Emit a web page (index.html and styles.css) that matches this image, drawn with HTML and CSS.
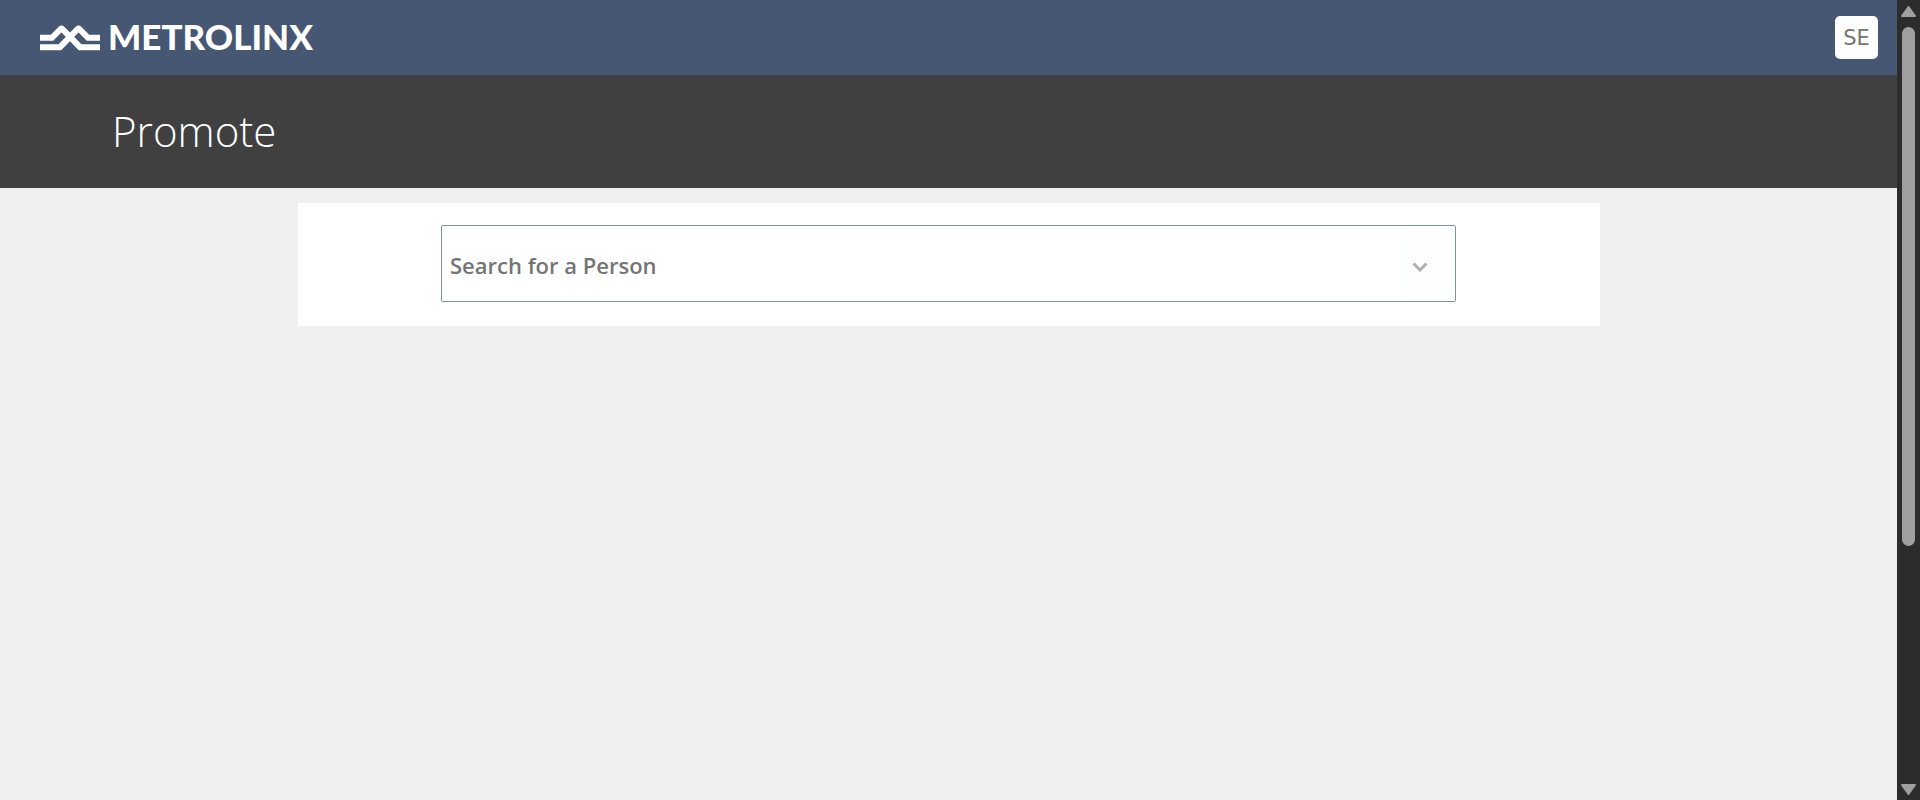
FILE: index.html
```html
<!DOCTYPE html>
<html lang="en">
<head>
<meta charset="utf-8">
<meta name="viewport" content="width=device-width, initial-scale=1">
<title>Promote</title>
<link rel="stylesheet" href="styles.css">
</head>
<body class="window">
<div class="page">
  <header class="topbar">
    <a class="brand" href="#">
      <svg class="brand-mark" viewBox="0 0 60 26" aria-hidden="true">
        <path d="M0 12.800H12L20.500 4.200Q21.500 3.300 22.500 4.200L40 22.200H60M0 22.200H20L37.500 4.200Q38.500 3.300 39.500 4.200L48 12.800H60"/>
      </svg>
      <span class="brand-name">METROLINX</span>
    </a>
    <button class="avatar" type="button">SE</button>
  </header>
  <div class="titlebar">
    <h1 class="title">Promote</h1>
  </div>
  <main class="content">
    <form class="card">
      <div class="combo">
        <input class="combo-input" type="text" placeholder="Search for a Person" aria-label="Search for a Person">
        <button class="combo-toggle" type="button" aria-label="Show people">
          <svg class="chevron" viewBox="0 0 16 10" aria-hidden="true"><path d="M1.500 1.500L8 8L14.500 1.500"/></svg>
        </button>
      </div>
    </form>
  </main>
</div>
<div class="scrollbar" aria-hidden="true">
  <svg class="arrow" viewBox="0 0 15 11"><path d="M7.500 1L14 10H1Z"/></svg>
  <div class="track"><div class="thumb"></div></div>
  <svg class="arrow" viewBox="0 0 15 11"><path d="M1 1H14L7.500 10Z"/></svg>
</div>
</body>
</html>
```

FILE: styles.css
```css
* {
  box-sizing: border-box;
}

.window {
  display: flex;
  height: 100vh;
  margin: 0;
  overflow: hidden;
  background: #f0f0f0;
  font-family: "Open Sans", "Noto Sans", sans-serif;
}

.page {
  flex: 1;
  min-width: 0;
}

.topbar {
  display: flex;
  align-items: center;
  justify-content: space-between;
  height: 75px;
  padding: 0 19px 0 40px;
  background: #455773;
}

.brand {
  display: flex;
  align-items: center;
  gap: 8px;
  color: #fff;
  text-decoration: none;
}

.brand-mark {
  width: 60px;
  height: 26px;
  fill: none;
  stroke: #fff;
  stroke-width: 6;
}

.brand-name {
  padding-bottom: 4px;
  font-family: Lato, sans-serif;
  font-size: 35px;
  font-weight: 900;
  line-height: 40px;
}

.avatar {
  width: 43px;
  height: 43px;
  padding: 0;
  border: 0;
  border-radius: 5px;
  background: #fff;
  color: #757575;
  font-family: "DejaVu Sans", sans-serif;
  font-size: 21px;
}

.titlebar {
  display: flex;
  align-items: center;
  height: 113px;
  padding: 0 112px 2px;
  background: #404040;
}

.title {
  margin: 0;
  color: #fff;
  font-size: 42px;
  font-weight: 300;
  line-height: 60px;
}

.content {
  padding: 15px 297px 0 298px;
}

.card {
  padding: 22px 144px 24px 143px;
  background: #fff;
}

.combo {
  display: flex;
  height: 77px;
  border: 1px solid #81919b;
  border-radius: 2px;
  overflow: hidden;
}

.combo-input {
  flex: 1;
  min-width: 0;
  padding: 2px 8px 0;
  border: 0;
  outline: 0;
  background: #fff;
  color: #333;
  font-family: inherit;
  font-size: 22px;
  font-weight: 600;
}

.combo-input::placeholder {
  color: #757575;
  opacity: 1;
}

.combo-toggle {
  display: flex;
  align-items: center;
  width: 53px;
  padding: 6px 0 0 10px;
  border: 0;
  background: #fcfdff;
}

.chevron {
  width: 16px;
  height: 10px;
  fill: none;
  stroke: #b0b0b0;
  stroke-width: 3;
}

.scrollbar {
  display: flex;
  flex-direction: column;
  align-items: center;
  gap: 10px;
  width: 23px;
  padding: 6px 0 5px;
  background: #2c2c2c;
}

.arrow {
  flex: none;
  width: 15px;
  height: 11px;
  fill: #9f9f9f;
  stroke: #9f9f9f;
  stroke-width: 2;
  stroke-linejoin: round;
}

.track {
  flex: 1;
  width: 13px;
}

.thumb {
  height: 69.5%;
  border-radius: 7px;
  background: #9f9f9f;
}
```
